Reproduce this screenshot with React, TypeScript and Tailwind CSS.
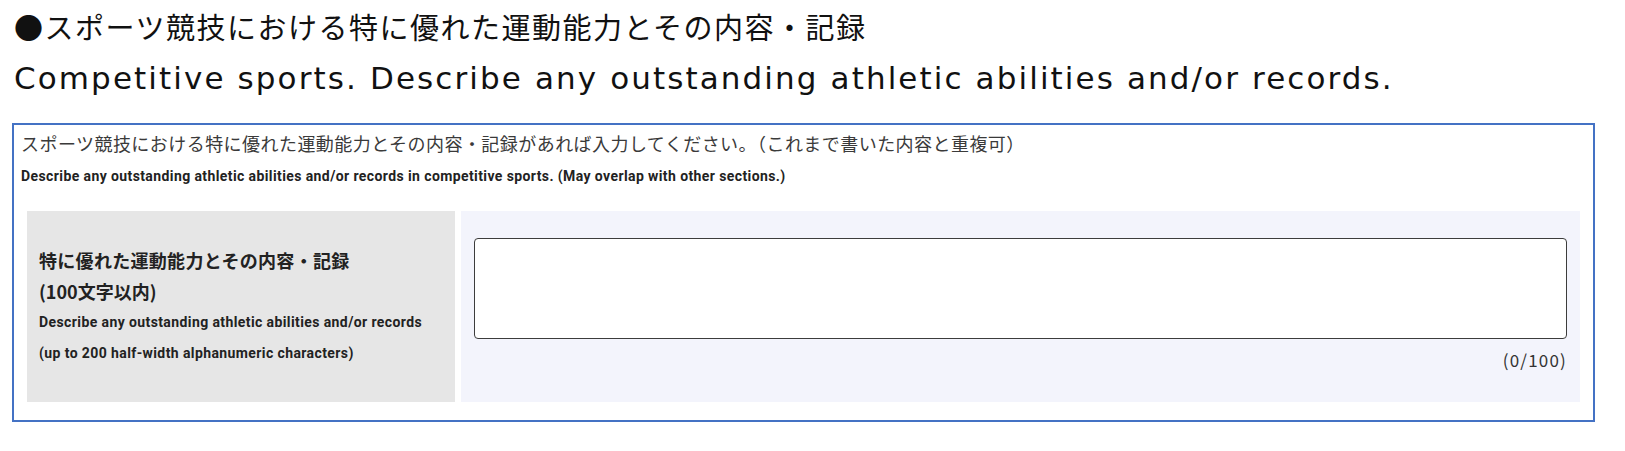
const latin = "font-['Roboto','Noto_Sans_CJK_JP',sans-serif] font-bold text-[14px] tracking-[0.4px] text-[#222]";

export default function App() {
  return (
    <div className="min-h-screen bg-white text-black pt-[4px]">
      <div className="pl-[14px] font-['Noto_Sans_CJK_JP',sans-serif] text-[29px] leading-[44px] tracking-[1.5px] text-[#111]">
        ●スポーツ競技における特に優れた運動能力とその内容・記録
      </div>
      <div className="mt-[8px] pl-[14px] font-['DejaVu_Sans','Noto_Sans_CJK_JP',sans-serif] text-[31px] leading-[44px] tracking-[2.1px] text-[#111]">
        Competitive sports. Describe any outstanding athletic abilities and/or records.
      </div>

      <section className="mt-[23px] ml-[12px] mr-[30px] border-2 border-[#4472c4] px-[7px] pt-[5px] pb-[18px]">
        <p className="font-['Noto_Sans_CJK_JP',sans-serif] text-[18px] leading-[26px] tracking-[0.45px] text-[#3a3a3a]">
          スポーツ競技における特に優れた運動能力とその内容・記録があれば入力してください。（これまで書いた内容と重複可）
        </p>
        <p className={`mt-[11px] leading-[18px] ${latin}`}>
          Describe any outstanding athletic abilities and/or records in competitive sports. (May overlap with other sections.)
        </p>

        <div className="mt-[26px] mx-[6px] flex gap-[6px] h-[191px]">
          <div className="w-[428px] shrink-0 bg-[#e6e6e6] px-[12px] flex flex-col justify-center">
            <p className="font-['Noto_Sans_CJK_JP',sans-serif] font-bold text-[18px] leading-[31px] tracking-[0.3px] text-[#222]">
              特に優れた運動能力とその内容・記録
            </p>
            <p className="font-['Noto_Sans_CJK_JP',sans-serif] font-bold text-[18px] leading-[31px] text-[#222]">
              (100文字以内)
            </p>
            <p className={`leading-[31px] ${latin}`}>
              Describe any outstanding athletic abilities and/or records
            </p>
            <p className={`leading-[31px] ${latin}`}>
              (up to 200 half-width alphanumeric characters)
            </p>
          </div>

          <div className="flex-1 bg-[#f3f4fc] px-[13px] pt-[27px]">
            <textarea
              className="block w-full h-[101px] resize-none rounded-[4px] border-[1.5px] border-[#3c3c3c] bg-white outline-none"
              aria-label="特に優れた運動能力とその内容・記録"
            />
            <div className="mt-[8px] text-right font-['Noto_Sans_CJK_JP',sans-serif] text-[17px] leading-[26px] tracking-[1.2px] text-[#333]">
              (0/100)
            </div>
          </div>
        </div>
      </section>
    </div>
  );
}
